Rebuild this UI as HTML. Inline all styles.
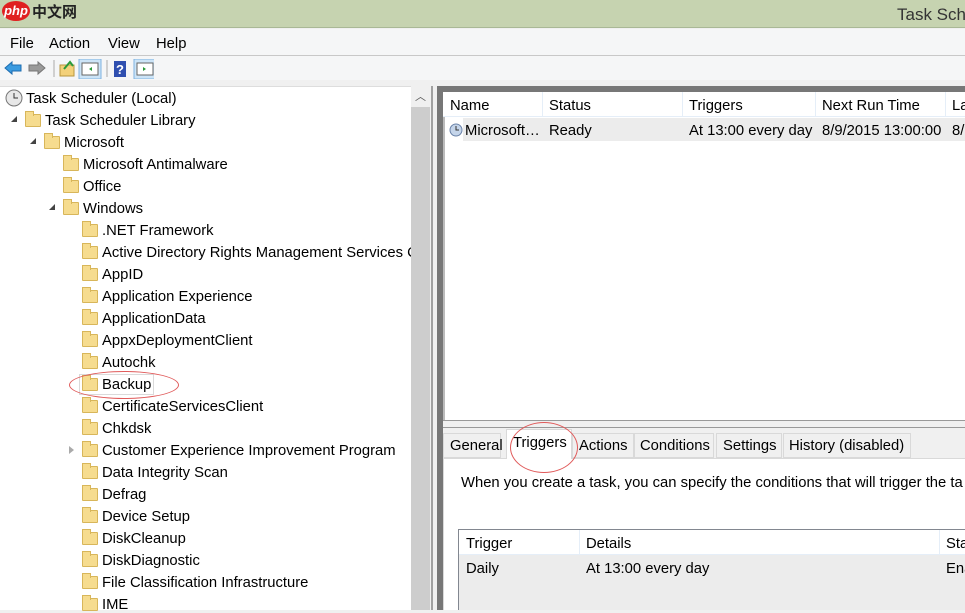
<!DOCTYPE html>
<html><head><style>
*{margin:0;padding:0;box-sizing:border-box}
body{width:965px;height:610px;overflow:hidden;background:#f0f0f0;font-family:"Segoe UI","Liberation Sans",sans-serif;font-size:14.8px;color:#000;position:relative}
.a{position:absolute;white-space:nowrap}
.t{position:absolute;white-space:nowrap;margin-top:3px}
.fold{position:absolute;width:16px;height:13px;background:#f6dc8f;border:1px solid #d8b65a;border-radius:1px}
.fold:before{content:"";position:absolute;left:-1px;top:-4px;width:7px;height:4px;background:#f6dc8f;border:1px solid #d8b65a;border-bottom:none}
.tri{position:absolute;width:0;height:0}
.z{z-index:5}
</style></head><body>
<div class="a" style="left:0;top:0;width:965px;height:28px;background:#c6d3b0;border-bottom:1px solid #a9b896"></div>
<div class="a" style="left:2px;top:1px;width:28px;height:20px;background:#e02020;border-radius:50%;color:#fff;font-weight:bold;font-style:italic;font-size:13px;line-height:19px;text-align:center">php</div>
<div class="a" style="left:32px;top:1px;font-size:15px;font-weight:bold;color:#222;font-family:'Noto Sans CJK SC',sans-serif">中文网</div>
<div class="a" style="left:897px;top:5px;font-size:17px;color:#333">Task Sch</div>
<div class="a" style="left:0;top:29px;width:965px;height:27px;background:#f5f6f7;border-bottom:1px solid #c8c8c8"></div>
<div class="t" style="left:10px;top:33px">File</div>
<div class="t" style="left:49px;top:33px">Action</div>
<div class="t" style="left:108px;top:33px">View</div>
<div class="t" style="left:156px;top:33px">Help</div>
<div class="a" style="left:0;top:56px;width:965px;height:24px;background:#f5f6f7"></div>
<svg class="a" style="left:4px;top:59px" width="150" height="20">
<path d="M1 9 L8 3 V6 H17 V12 H8 V15 Z" fill="#3a9be0" stroke="#1d6cb0"/>
<path d="M41 9 L34 3 V6 H25 V12 H34 V15 Z" fill="#9a9a9a" stroke="#777"/>
<line x1="50" y1="1" x2="50" y2="18" stroke="#aaa"/>
<rect x="56" y="6" width="14" height="11" fill="#f3d17a" stroke="#b8963e"/><path d="M60 10 L66 3 L69 7" stroke="#2a9a3a" stroke-width="2" fill="none"/>
<rect x="75" y="0" width="22" height="20" fill="#cce4f7" stroke="#7fb3e0"/><rect x="78" y="4" width="16" height="12" fill="#fff" stroke="#666"/><path d="M88 8 L85 10 L88 12Z" fill="#2a9a3a"/>
<line x1="103" y1="1" x2="103" y2="18" stroke="#aaa"/>
<rect x="110" y="2" width="12" height="16" fill="#2f4fb0"/><text x="112" y="15" fill="#fff" font-size="13" font-weight="bold" font-family="Liberation Sans">?</text>
<rect x="130" y="0" width="22" height="20" fill="#cce4f7" stroke="#7fb3e0"/><rect x="133" y="4" width="16" height="12" fill="#fff" stroke="#666"/><path d="M139 8 L142 10 L139 12Z" fill="#2a9a3a"/>
</svg>
<div class="a" style="left:0;top:86px;width:411px;height:524px;background:#fff;border-top:1px solid #ddd"></div>
<div class="a z" style="left:411px;top:87px;width:19px;height:523px;background:#cdcdcd"></div>
<div class="a z" style="left:411px;top:87px;width:19px;height:20px;background:#f0f0f0;text-align:center;font-size:11px;color:#555;line-height:20px">︿</div>
<div class="a z" style="left:430px;top:86px;width:7px;height:524px;background:#f0f0f0"></div>
<div class="a z" style="left:431px;top:86px;width:2px;height:524px;background:#a0a0a0"></div>
<div class="a" style="left:437px;top:86px;width:528px;height:524px;border:6px solid #777;border-right:none;border-bottom:none;background:#fff;box-shadow:inset 2px 2px 0 #bbb"></div>

<!-- tree -->
<svg class="a" style="left:5px;top:89px" width="18" height="18"><circle cx="9" cy="9" r="8" fill="#e8e8e8" stroke="#777"/><path d="M9 4 V9 H13" stroke="#333" fill="none"/></svg>
<div class="t" style="left:26px;top:88px">Task Scheduler (Local)</div>
<div class="tri" style="left:11px;top:116px;border-left:6px solid transparent;border-bottom:6px solid #444"></div>
<div class="fold" style="left:25px;top:114px"></div>
<div class="t" style="left:45px;top:110px">Task Scheduler Library</div>
<div class="tri" style="left:30px;top:138px;border-left:6px solid transparent;border-bottom:6px solid #444"></div>
<div class="fold" style="left:44px;top:136px"></div>
<div class="t" style="left:64px;top:132px">Microsoft</div>
<div class="fold" style="left:63px;top:158px"></div><div class="t" style="left:83px;top:154px">Microsoft Antimalware</div>
<div class="fold" style="left:63px;top:180px"></div><div class="t" style="left:83px;top:176px">Office</div>
<div class="tri" style="left:49px;top:204px;border-left:6px solid transparent;border-bottom:6px solid #444"></div>
<div class="fold" style="left:63px;top:202px"></div><div class="t" style="left:83px;top:198px">Windows</div>
<div class="fold" style="left:82px;top:224px"></div><div class="t" style="left:102px;top:220px">.NET Framework</div>
<div class="fold" style="left:82px;top:246px"></div><div class="t" style="left:102px;top:242px">Active Directory Rights Management Services C</div>
<div class="fold" style="left:82px;top:268px"></div><div class="t" style="left:102px;top:264px">AppID</div>
<div class="fold" style="left:82px;top:290px"></div><div class="t" style="left:102px;top:286px">Application Experience</div>
<div class="fold" style="left:82px;top:312px"></div><div class="t" style="left:102px;top:308px">ApplicationData</div>
<div class="fold" style="left:82px;top:334px"></div><div class="t" style="left:102px;top:330px">AppxDeploymentClient</div>
<div class="fold" style="left:82px;top:356px"></div><div class="t" style="left:102px;top:352px">Autochk</div>
<div class="a" style="left:79px;top:374px;width:75px;height:21px;border:1px solid #dadada"></div>
<div class="fold" style="left:82px;top:378px"></div><div class="t" style="left:102px;top:374px">Backup</div>
<div class="a" style="left:69px;top:371px;width:110px;height:28px;border:1px solid #e05a5a;border-radius:50%"></div>
<div class="fold" style="left:82px;top:400px"></div><div class="t" style="left:102px;top:396px">CertificateServicesClient</div>
<div class="fold" style="left:82px;top:422px"></div><div class="t" style="left:102px;top:418px">Chkdsk</div>
<div class="tri" style="left:69px;top:446px;border-top:4px solid transparent;border-bottom:4px solid transparent;border-left:5px solid #aaa"></div>
<div class="fold" style="left:82px;top:444px"></div><div class="t" style="left:102px;top:440px">Customer Experience Improvement Program</div>
<div class="fold" style="left:82px;top:466px"></div><div class="t" style="left:102px;top:462px">Data Integrity Scan</div>
<div class="fold" style="left:82px;top:488px"></div><div class="t" style="left:102px;top:484px">Defrag</div>
<div class="fold" style="left:82px;top:510px"></div><div class="t" style="left:102px;top:506px">Device Setup</div>
<div class="fold" style="left:82px;top:532px"></div><div class="t" style="left:102px;top:528px">DiskCleanup</div>
<div class="fold" style="left:82px;top:554px"></div><div class="t" style="left:102px;top:550px">DiskDiagnostic</div>
<div class="fold" style="left:82px;top:576px"></div><div class="t" style="left:102px;top:572px">File Classification Infrastructure</div>
<div class="fold" style="left:82px;top:598px"></div><div class="t" style="left:102px;top:594px">IME</div>

<!-- task list -->
<div class="a" style="left:443px;top:92px;width:522px;height:25px;background:#fff;border-bottom:1px solid #e5eef8"></div>
<div class="a" style="left:542px;top:92px;width:1px;height:25px;background:#e5eef8"></div>
<div class="a" style="left:682px;top:92px;width:1px;height:25px;background:#e5eef8"></div>
<div class="a" style="left:815px;top:92px;width:1px;height:25px;background:#e5eef8"></div>
<div class="a" style="left:945px;top:92px;width:1px;height:25px;background:#e5eef8"></div>
<div class="t" style="left:450px;top:95px">Name</div>
<div class="t" style="left:549px;top:95px">Status</div>
<div class="t" style="left:689px;top:95px">Triggers</div>
<div class="t" style="left:822px;top:95px">Next Run Time</div>
<div class="t" style="left:952px;top:95px">La</div>
<div class="a" style="left:463px;top:118px;width:502px;height:23px;background:#ececec"></div>
<svg class="a" style="left:449px;top:123px" width="14" height="14"><circle cx="7" cy="7" r="6" fill="#c5d5ea" stroke="#6a82a8"/><path d="M7 3 V7 H10" stroke="#333" fill="none"/></svg>
<div class="t" style="left:465px;top:120px">Microsoft…</div>
<div class="t" style="left:549px;top:120px">Ready</div>
<div class="t" style="left:689px;top:120px">At 13:00 every day</div>
<div class="t" style="left:822px;top:120px">8/9/2015 13:00:00</div>
<div class="t" style="left:952px;top:120px">8/</div>

<!-- splitter -->
<div class="a" style="left:443px;top:420px;width:522px;height:8px;background:#f0f0f0;border-top:1px solid #999;border-bottom:1px solid #999"></div>
<div class="a" style="left:443px;top:428px;width:522px;height:182px;background:#f0f0f0"></div>
<div class="a" style="left:443px;top:458px;width:522px;height:152px;background:#fff;border-top:1px solid #d9d9d9;border-left:1px solid #d9d9d9"></div>
<div class="a" style="left:443px;top:433px;width:58px;height:25px;background:#f0f0f0;border:1px solid #d9d9d9;padding:4px 0 0 6px">General</div>
<div class="a" style="left:506px;top:429px;width:66px;height:30px;background:#fff;border:1px solid #d9d9d9;border-bottom:none;padding:5px 0 0 6px">Triggers</div>
<div class="a" style="left:572px;top:433px;width:62px;height:25px;background:#f0f0f0;border:1px solid #d9d9d9;padding:4px 0 0 6px">Actions</div>
<div class="a" style="left:634px;top:433px;width:80px;height:25px;background:#f0f0f0;border:1px solid #d9d9d9;padding:4px 0 0 5px">Conditions</div>
<div class="a" style="left:716px;top:433px;width:66px;height:25px;background:#f0f0f0;border:1px solid #d9d9d9;padding:4px 0 0 6px">Settings</div>
<div class="a" style="left:783px;top:433px;width:128px;height:25px;background:#f0f0f0;border:1px solid #d9d9d9;padding:4px 0 0 5px">History (disabled)</div>
<div class="a" style="left:510px;top:422px;width:68px;height:51px;border:1px solid #e05a5a;border-radius:50%"></div>
<div class="t" style="left:461px;top:472px">When you create a task, you can specify the conditions that will trigger the ta</div>
<div class="a" style="left:458px;top:529px;width:507px;height:81px;background:#ececec;border:1px solid #828790;border-right:none;border-bottom:none"></div>
<div class="a" style="left:459px;top:530px;width:506px;height:25px;background:#fff;border-bottom:1px solid #e5eef8"></div>
<div class="a" style="left:579px;top:530px;width:1px;height:25px;background:#e5eef8"></div>
<div class="a" style="left:939px;top:530px;width:1px;height:25px;background:#e5eef8"></div>
<div class="t" style="left:466px;top:533px">Trigger</div>
<div class="t" style="left:586px;top:533px">Details</div>
<div class="t" style="left:946px;top:533px">Sta</div>
<div class="t" style="left:466px;top:558px">Daily</div>
<div class="t" style="left:586px;top:558px">At 13:00 every day</div>
<div class="t" style="left:946px;top:558px">Ena</div>
</body></html>
